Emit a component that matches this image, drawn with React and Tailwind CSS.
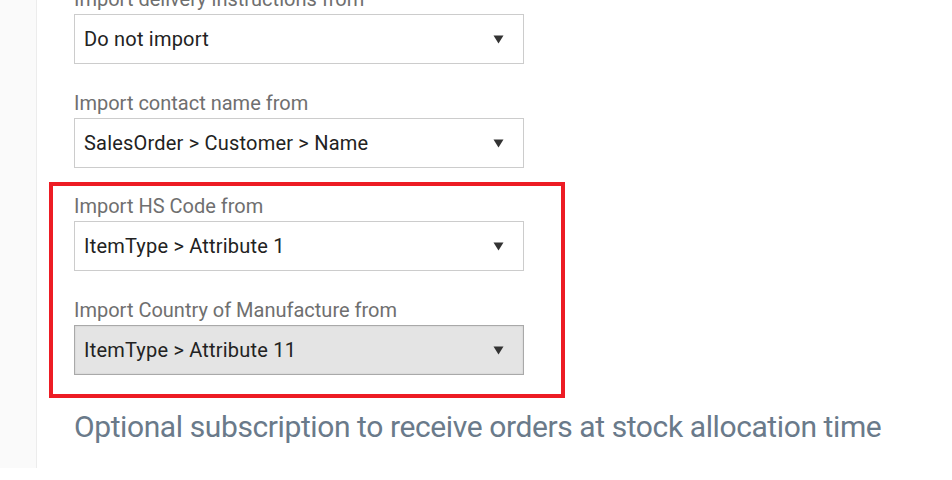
const fields = [
  { label: "Import delivery instructions from", value: "Do not import" },
  { label: "Import contact name from", value: "SalesOrder > Customer > Name" },
];

const marked = [
  { label: "Import HS Code from", value: "ItemType > Attribute 1" },
  { label: "Import Country of Manufacture from", value: "ItemType > Attribute 11", focused: true },
];

function Caret() {
  return (
    <svg width="11" height="9" viewBox="0 0 11 9" className="shrink-0">
      <path d="M0.5 0.5 H10.5 L5.5 8.5 Z" fill="#333" />
    </svg>
  );
}

function Field({ label, value, focused }) {
  return (
    <div className="flex flex-col">
      <label className="text-[20px] leading-[26px] text-[#6f6f6f] mb-[2px] whitespace-nowrap">{label}</label>
      <div
        className={
          "h-[50px] w-[450px] flex items-center justify-between pl-[9px] pr-[19px] border " +
          (focused
            ? "bg-[#e4e4e4] border-[#a9a9a9] shadow-[inset_0_0_2px_rgba(0,0,0,0.12)]"
            : "bg-white border-[#cccccc]")
        }
      >
        <span className="text-[20px] tracking-[0.2px] text-[#222] whitespace-nowrap">{value}</span>
        <Caret />
      </div>
    </div>
  );
}

export default function App() {
  return (
    <div className="flex w-[952px] h-[480px] bg-white overflow-hidden font-['Roboto',sans-serif]">
      <div className="w-[37px] h-[468px] bg-[#fafafa] border-r border-[#ececec] shrink-0" />
      <div className="pl-[37px] -mt-[14px] flex flex-col">
        <div className="flex flex-col gap-[26px]">
          {fields.map((f) => (
            <Field key={f.label} {...f} />
          ))}
        </div>
        <div className="mt-[14px] -ml-[25px] w-[516px] border-4 border-[#ed1c24] pl-[21px] pt-[7px] pb-[19px] flex flex-col gap-[26px]">
          {marked.map((f) => (
            <Field key={f.label} {...f} />
          ))}
        </div>
        <h2 className="mt-[11px] text-[30px] leading-[36px] tracking-[-0.4px] text-[#6a7a8a] whitespace-nowrap">
          Optional subscription to receive orders at stock allocation time
        </h2>
      </div>
    </div>
  );
}
